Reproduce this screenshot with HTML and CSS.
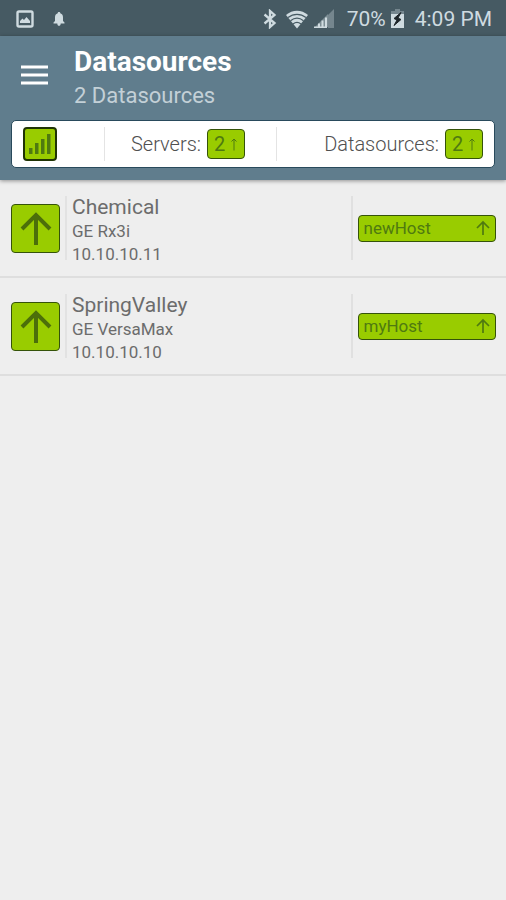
FILE: index.html
```html
<!DOCTYPE html>
<html lang="en">
<head>
<meta charset="utf-8">
<meta name="viewport" content="width=device-width, initial-scale=1">
<title>Datasources</title>
<link rel="stylesheet" href="styles.css">
</head>
<body>
<div class="status-bar">
  <div class="status-group notifications">
    <svg width="18" height="18" viewBox="0 0 18 18" aria-hidden="true"><rect x="1.500" y="1.500" width="15" height="15" rx="1.500" fill="none" stroke="currentColor" stroke-width="2.400"/><path d="M4 13v-2l2.500-2.500 1.500 1.500 2.500-3 3.500 4v2z" fill="currentColor"/></svg>
    <svg width="12" height="16" viewBox="0 0 12 16" aria-hidden="true"><path d="M6 1c.8 0 1.300.5 1.300 1.200C9.300 2.800 10 4.500 10 6.500V10l1.500 1.500v1H.5v-1L2 10V6.500c0-2 .7-3.700 2.700-4.300C4.700 1.500 5.200 1 6 1zM4.300 12.500h3.400c0 1.500-.7 2.300-1.700 2.300s-1.700-.8-1.700-2.300z" fill="currentColor"/></svg>
  </div>
  <div class="status-group system">
    <svg width="14" height="20" viewBox="0 0 14 20" aria-hidden="true"><path d="M1.500 5.500l10 8.500L7 18V2l4.500 4-10 8.500" fill="none" stroke="currentColor" stroke-width="2.300"/></svg>
    <svg class="wifi" width="22" height="19" viewBox="0 0 22 19" aria-hidden="true"><path d="M11 18.500L0 5C6.500-.7 15.500-.7 22 5z" fill="currentColor"/><path d="M2 7.500c5.500-4.300 12.500-4.300 18 0M4.500 10.700c4-3.200 9-3.200 13 0M7 13.900c2.500-2 5.500-2 8 0" fill="none" stroke="#465a63" stroke-width="1.300"/></svg>
    <svg class="signal" width="20" height="20" viewBox="0 0 20 20" aria-hidden="true"><path d="M14 6l6-6v19h-6z" fill="currentColor" opacity=".35"/><path d="M1 17.500h2V19H0zM4 14.500h2V19H4zM7.500 11.500h2V19h-2zM11 8.500h2V19h-2zM0 17.500h13V19H0z" fill="currentColor"/><path d="M1 18L14 5v13z" fill="currentColor" opacity=".4"/></svg>
    <span class="battery-level">70%</span>
    <svg width="13" height="20" viewBox="0 0 13 20" aria-hidden="true"><path d="M4 0h5v2h4v17H0V2h4z" fill="currentColor" opacity=".35"/><path d="M0 5h13v14H0z" fill="currentColor"/><path d="M10 3.500L3 9.500 6 11l-3 5.500 7-6-3-1.500z" fill="#1d2529" stroke="#1d2529"/></svg>
    <time class="clock">4:09 PM</time>
  </div>
</div>
<header class="app-bar">
  <div class="toolbar">
    <button class="menu-button" type="button" aria-label="Menu">
      <svg width="27" height="20" viewBox="0 0 27 20" aria-hidden="true"><path d="M0 2h27M0 10h27M0 18h27" stroke="#fff" stroke-width="3"/></svg>
    </button>
    <div>
      <h1 class="title">Datasources</h1>
      <p class="subtitle">2 Datasources</p>
    </div>
  </div>
  <div class="summary">
    <div class="summary-signal">
      <span class="badge signal-badge"><svg width="24" height="20" viewBox="0 0 24 20" aria-hidden="true"><path d="M1 14h3.500v6H1zM7 9h3.500v11H7zM13 5h3.500v15H13zM19 0h3.500v20H19z" fill="#4f7a10"/></svg></span>
    </div>
    <div class="summary-servers">Servers: <span class="badge count-badge">2 <svg width="8" height="14" viewBox="0 0 8 14" aria-hidden="true"><path d="M4 13.500V2M1.500 4.500L4 2l2.500 2.500" class="arrow-thin"/></svg></span></div>
    <div class="summary-sources">Datasources: <span class="badge count-badge">2 <svg width="8" height="14" viewBox="0 0 8 14" aria-hidden="true"><path d="M4 13.500V2M1.500 4.500L4 2l2.500 2.500" class="arrow-thin"/></svg></span></div>
  </div>
</header>
<main>
  <ul class="source-list">
    <li class="source">
      <span class="badge state-badge"><svg width="32" height="34" viewBox="0 0 32 34" aria-hidden="true"><path d="M16 34V4M2 18L16 4l14 14" class="arrow-thick"/></svg></span>
      <div class="source-info">
        <h2 class="source-name">Chemical</h2>
        <p class="source-detail">GE Rx3i</p>
        <p class="source-detail">10.10.10.11</p>
      </div>
      <div class="source-host"><span class="badge host-badge">newHost <svg width="14" height="16" viewBox="0 0 14 16" aria-hidden="true"><path d="M7 15V2M1 8l6-6 6 6" class="arrow-host"/></svg></span></div>
    </li>
    <li class="source">
      <span class="badge state-badge"><svg width="32" height="34" viewBox="0 0 32 34" aria-hidden="true"><path d="M16 34V4M2 18L16 4l14 14" class="arrow-thick"/></svg></span>
      <div class="source-info">
        <h2 class="source-name">SpringValley</h2>
        <p class="source-detail">GE VersaMax</p>
        <p class="source-detail">10.10.10.10</p>
      </div>
      <div class="source-host"><span class="badge host-badge">myHost <svg width="14" height="16" viewBox="0 0 14 16" aria-hidden="true"><path d="M7 15V2M1 8l6-6 6 6" class="arrow-host"/></svg></span></div>
    </li>
  </ul>
</main>
</body>
</html>
```
FILE: styles.css
```css
* {
  box-sizing: border-box;
}

body {
  margin: 0;
  background: #eeeeee;
  color: #6c6c6c;
  font-family: Roboto, "Liberation Sans", sans-serif;
}

h1, h2, p, ul {
  margin: 0;
  padding: 0;
  font-weight: 400;
}

svg {
  display: block;
  flex: none;
}

.status-bar {
  display: flex;
  justify-content: space-between;
  align-items: center;
  height: 36px;
  padding: 2px 14px 0 16px;
  background: #465a63;
  color: #cfdbe0;
  font-size: 21px;
}

.status-group {
  display: flex;
  align-items: center;
}

.notifications {
  gap: 19px;
}

.wifi {
  margin-left: 9px;
}

.signal {
  margin-left: 6px;
}

.battery-level {
  margin: 0 5px 0 13px;
}

.clock {
  margin-left: 11px;
}

.app-bar {
  padding: 8px 11px 12px;
  background: #607d8d;
  box-shadow: 0 1px 4px rgba(0, 0, 0, 0.4);
}

.toolbar {
  display: flex;
  align-items: center;
  gap: 26px;
  padding: 0 10px 8px;
}

.menu-button {
  padding: 0 0 6px;
  border: 0;
  background: none;
}

.title {
  color: #ffffff;
  font-size: 28px;
  font-weight: 700;
  line-height: 36px;
}

.subtitle {
  color: #c3d0d7;
  font-size: 22px;
  line-height: 32px;
}

.summary {
  display: grid;
  grid-template-columns: 81fr 173fr 206fr;
  height: 48px;
  padding: 6px 11px;
  border: 1px solid #294a5c;
  border-radius: 5px;
  background: #ffffff;
  color: #505050;
  font-size: 20px;
  font-weight: 300;
}

.summary > div {
  display: flex;
  align-items: center;
  justify-content: flex-end;
  gap: 6px;
}

.summary .summary-signal {
  justify-content: flex-start;
}

.summary .summary-servers {
  padding-right: 31px;
  border-left: 1px solid #e4e4e4;
  border-right: 1px solid #e4e4e4;
}

.badge {
  display: flex;
  align-items: center;
  flex: none;
  border: 1px solid #35530a;
  border-radius: 4px;
  background: #99cc00;
  color: #4f7a10;
}

.signal-badge {
  justify-content: center;
  width: 34px;
  height: 34px;
  border: 2px solid #203405;
}

.count-badge {
  justify-content: space-between;
  width: 38px;
  height: 30px;
  padding: 0 6px;
  font-weight: 400;
}

.arrow-thin,
.arrow-host,
.arrow-thick {
  fill: none;
  stroke: #4f7a10;
}

.arrow-host {
  stroke-width: 1.7;
}

.arrow-thick {
  stroke: #4c6f0a;
  stroke-width: 4;
}

.source-list {
  list-style: none;
}

.source {
  display: flex;
  align-items: center;
  height: 98px;
  padding: 0 10px 0 11px;
  border-bottom: 2px solid #dedede;
}

.state-badge {
  justify-content: center;
  width: 49px;
  height: 49px;
}

.source-info {
  display: flex;
  flex: 1;
  flex-direction: column;
  justify-content: center;
  height: 64px;
  margin-left: 5px;
  padding: 4px 0 0 5px;
  border-left: 2px solid #e2e2e2;
}

.source-name {
  font-size: 21px;
  line-height: 26px;
}

.source-detail {
  font-size: 17px;
  line-height: 23px;
}

.source-host {
  display: flex;
  align-items: center;
  width: 30%;
  height: 64px;
  padding-left: 5px;
  border-left: 2px solid #e0e0e0;
}

.host-badge {
  flex: 1;
  justify-content: space-between;
  height: 27px;
  padding: 0 5px;
  font-size: 17px;
}
```
